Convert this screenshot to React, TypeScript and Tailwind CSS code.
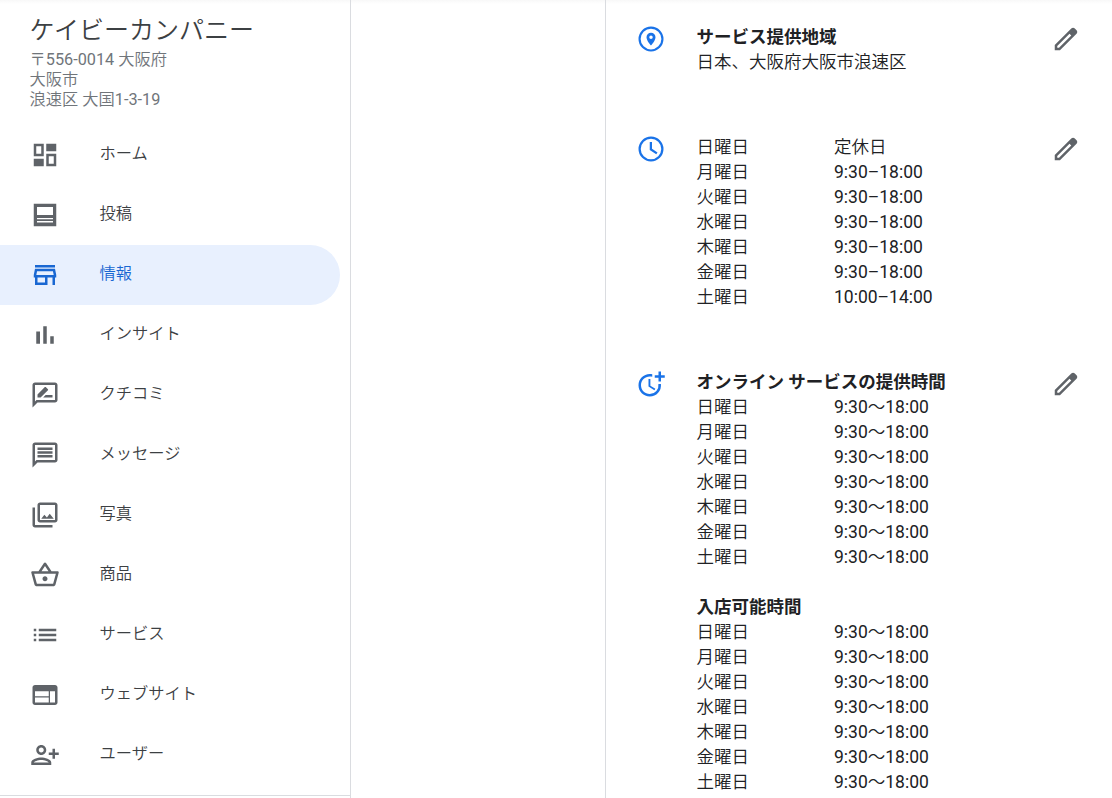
import React from 'react';
import clsx from 'clsx';
import {
  MdOutlineMessage,
  MdList,
  MdWeb,
  MdOutlineShoppingBasket,
  MdOutlinePersonAddAlt1,
  MdMoreTime,
} from 'react-icons/md';

interface IconProps {
  className?: string;
}

// Small helper for the single-path icons the icon set doesn't have
function glyph(d: string) {
  return function Glyph({ className }: IconProps) {
    return (
      <svg viewBox="0 0 24 24" fill="currentColor" fillRule="evenodd" className={className}>
        <path d={d} />
      </svg>
    );
  };
}

const HomeIcon = glyph('M3 3h8v10H3zM5 5v6h4V5zM13 3h8v6h-8zM13 11h8v10h-8zM15 13v6h4v-6zM3 15h8v6H3z');
const PostsIcon = glyph('M3 3h18v18H3zM5.6 5.6v6.4h12.8V5.6zM5.6 14.4v.9h12.8v-.9zM5.6 16.8v1.1h12.8v-1.1z');
const StoreIcon = glyph(
  'M4 4h16v2H4zM20 7H4l-1 5v2h1v6h10v-6h4v6h2v-6h1v-2zM6 18v-4h6v4zM5.04 12l.6-3h12.72l.6 3z'
);
const InsightsIcon = glyph('M5 9.2h3V19H5zM10.6 5h2.8v14h-2.8zM16.2 13H19v6h-2.8z');
const ReviewsIcon = glyph(
  'M20 2H4c-1.1 0-2 .9-2 2v18l4-4h14c1.1 0 2-.9 2-2V4c0-1.1-.9-2-2-2zm0 14H5.17L4 17.17V4h16v12zM10.5 14H18v-2h-5.5zM14.36 8.13c.2-.2.2-.51 0-.71l-1.77-1.77c-.2-.2-.51-.2-.71 0L6 11.53V14h2.47z'
);
const PhotosIcon = glyph(
  'M8 2h12c1.1 0 2 .9 2 2v12c0 1.1-.9 2-2 2H8c-1.1 0-2-.9-2-2V4c0-1.1.9-2 2-2zM8 4v12h12V4zM2 6h2v14h14v2H4c-1.1 0-2-.9-2-2zM9 15l2.5-3.2 2 2.2 2.3-3L19 15z'
);
const EditIcon = glyph(
  'M20.41 4.94l-1.35-1.35c-.78-.78-2.05-.78-2.83 0L3 16.82V21h4.18L20.41 7.77c.79-.78.79-2.05 0-2.83zM6.41 19.06L5 19v-1.36l9.82-9.82 1.41 1.41z'
);
const AreaIcon = glyph(
  'M12 2a10 10 0 1 0 0 20 10 10 0 0 0 0-20zM12 3.7a8.3 8.3 0 1 1 0 16.6 8.3 8.3 0 0 1 0-16.6zM12 7A3.6 3.6 0 0 0 8.4 10.6C8.4 13.4 12 17.2 12 17.2s3.6-3.8 3.6-6.6A3.6 3.6 0 0 0 12 7zM12 9.2a1.4 1.4 0 1 1 0 2.8 1.4 1.4 0 0 1 0-2.8z'
);
const ClockIcon = glyph(
  'M12 2a10 10 0 1 0 0 20 10 10 0 0 0 0-20zM12 3.8a8.2 8.2 0 1 1 0 16.4 8.2 8.2 0 0 1 0-16.4zM11 6.4h1.8v5.4l4.4 2.9-1 1.5-5.2-3.4z'
);

const menu = [
  { label: 'ホーム', icon: HomeIcon },
  { label: '投稿', icon: PostsIcon },
  { label: '情報', icon: StoreIcon, active: true },
  { label: 'インサイト', icon: InsightsIcon },
  { label: 'クチコミ', icon: ReviewsIcon },
  { label: 'メッセージ', icon: MdOutlineMessage },
  { label: '写真', icon: PhotosIcon },
  { label: '商品', icon: MdOutlineShoppingBasket },
  { label: 'サービス', icon: MdList },
  { label: 'ウェブサイト', icon: MdWeb },
  { label: 'ユーザー', icon: MdOutlinePersonAddAlt1 },
];

const days = ['日曜日', '月曜日', '火曜日', '水曜日', '木曜日', '金曜日', '土曜日'];
const openingHours = [
  '定休日',
  '9:30–18:00',
  '9:30–18:00',
  '9:30–18:00',
  '9:30–18:00',
  '9:30–18:00',
  '10:00–14:00',
];
const serviceHours = days.map(() => '9:30～18:00');

function Sidebar() {
  return (
    <aside className="w-[351px] shrink-0 border-r border-[#dadce0]">
      <div className="h-[796px] border-b border-[#dadce0]">
        <div className="h-[125px] pl-[29.5px] pt-[11px]">
          <h1 className="text-[25px] leading-[39px] text-[#3c4043]">ケイビーカンパニー</h1>
          <address className="text-[16.25px] leading-5 not-italic text-[#70757a]">
            〒556-0014 大阪府
            <br />
            大阪市
            <br />
            浪速区 大国1-3-19
          </address>
        </div>
        <nav>
          {menu.map(({ label, icon: Icon, active }) => (
            <a
              key={label}
              className={clsx(
                'flex h-[60px] w-[340px] items-center gap-[39.5px] rounded-r-full pl-[30px]',
                active ? 'bg-[#e8f0fe] text-[#1967d2]' : 'text-[#3c4043]'
              )}
            >
              <Icon className={clsx('size-[30px]', active ? 'text-[#1967d2]' : 'text-[#5f6368]')} />
              <span className="pb-0.5 text-[16.25px] leading-5">{label}</span>
            </a>
          ))}
        </nav>
      </div>
    </aside>
  );
}

function SectionTitle({ children }: { children: React.ReactNode }) {
  return <h2 className="font-['Roboto','Noto_Sans_CJK_JP',sans-serif] font-bold">{children}</h2>;
}

function HoursTable({ hours }: { hours: string[] }) {
  return (
    <dl className="grid grid-cols-[137.5px_1fr]">
      {days.map((day, index) => (
        <React.Fragment key={day}>
          <dt>{day}</dt>
          <dd>{hours[index]}</dd>
        </React.Fragment>
      ))}
    </dl>
  );
}

interface InfoRowProps {
  icon: React.ComponentType<IconProps>;
  children: React.ReactNode;
}

function InfoRow({ icon: Icon, children }: InfoRowProps) {
  return (
    <section className="flex items-start pl-[30px] pr-[31px]">
      <Icon className="size-[30px] shrink-0 text-[#1a73e8]" />
      <div className="-mb-px ml-[30.5px] flex-1 pt-px text-[17.5px] leading-[25px]">{children}</div>
      <EditIcon className="size-[30px] shrink-0 text-[#5f6368]" />
    </section>
  );
}

export default function App() {
  return (
    <div className="flex h-[798px] w-[1112px] overflow-hidden bg-white bg-linear-to-b from-[#f8f8f8] to-white to-[4px] font-['Roboto','Noto_Sans_CJK_JP_DemiLight','Noto_Sans_CJK_JP_Light','Noto_Sans_CJK_JP',sans-serif] text-[#202124]">
      <Sidebar />
      <div className="w-[254px] shrink-0" />
      <main className="flex flex-1 flex-col gap-[60px] border-l border-[#dadce0] pt-6">
        <InfoRow icon={AreaIcon}>
          <SectionTitle>サービス提供地域</SectionTitle>
          <p>日本、大阪府大阪市浪速区</p>
        </InfoRow>
        <InfoRow icon={ClockIcon}>
          <HoursTable hours={openingHours} />
        </InfoRow>
        <InfoRow icon={MdMoreTime}>
          <SectionTitle>オンライン サービスの提供時間</SectionTitle>
          <HoursTable hours={serviceHours} />
          <div className="h-[25px]" />
          <SectionTitle>入店可能時間</SectionTitle>
          <HoursTable hours={serviceHours} />
        </InfoRow>
      </main>
    </div>
  );
}
